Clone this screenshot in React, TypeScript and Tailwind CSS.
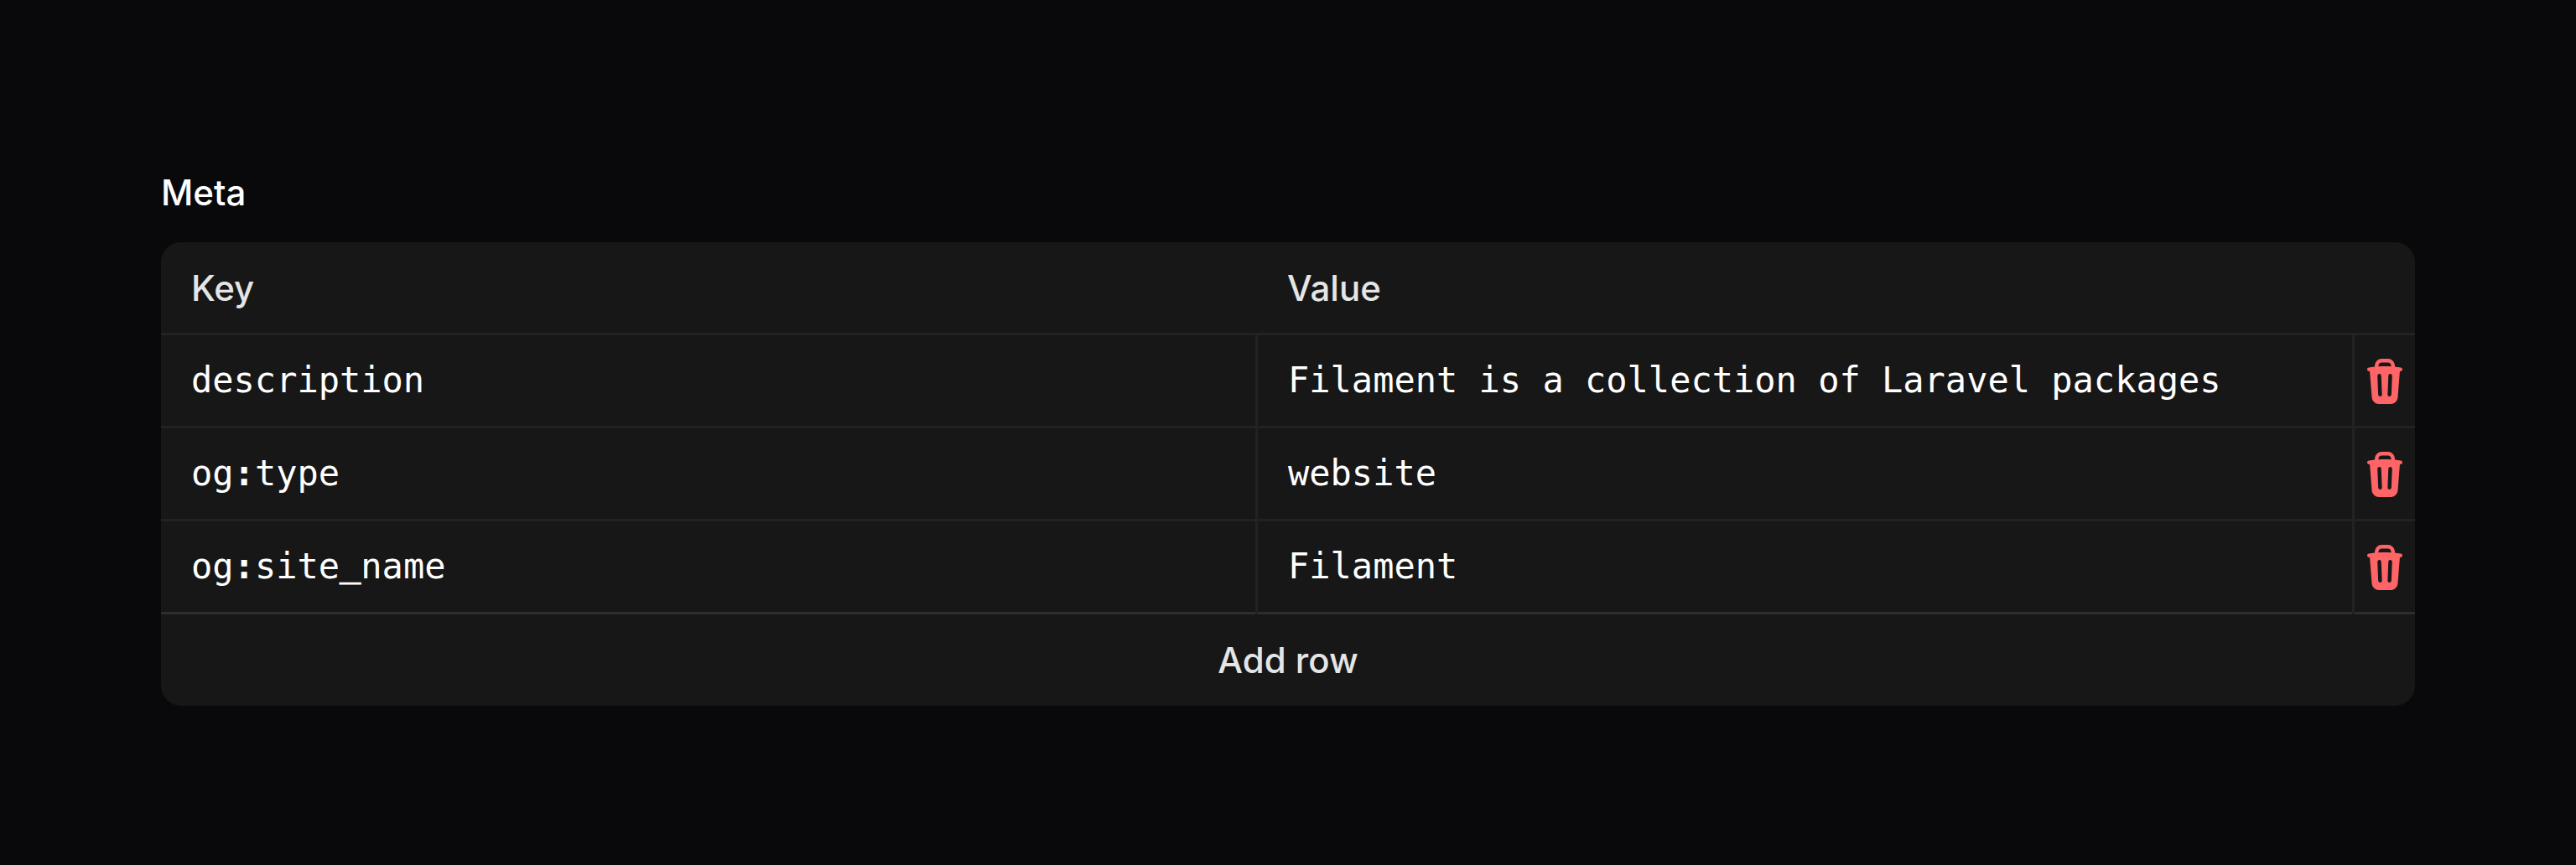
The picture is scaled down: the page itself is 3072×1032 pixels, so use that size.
import type { ReactNode } from "react";
import { HiMiniTrash } from "react-icons/hi2";

const rows: { id: string; key: ReactNode; value: string }[] = [
  { id: "description", key: "description", value: "Filament is a collection of Laravel packages" },
  {
    id: "type",
    key: (
      <>
        og<span className="font-bold">:</span>type
      </>
    ),
    value: "website",
  },
  {
    id: "site_name",
    key: (
      <>
        og<span className="font-bold">:</span>site
        <span className="relative -top-[3px] [-webkit-text-stroke:1px_white]">_</span>name
      </>
    ),
    value: "Filament",
  },
];

const columns = "grid grid-cols-[1308px_1308px_72px]";

export default function App() {
  return (
    <main className="h-[1032px] w-[3072px] bg-[#09090b] px-48 pt-[193px] font-[Inter,sans-serif] text-[42px] font-medium">
      <label className="block h-[72px] pt-px leading-[72px] text-white">Meta</label>

      <section className="mt-6 overflow-hidden rounded-[24px] bg-[#171717]">
        <header className={`${columns} h-[108px] pt-px leading-[108px] text-[#e5e5e5]`}>
          <div className="pl-9">Key</div>
          <div className="pl-[35px]">Value</div>
        </header>

        <div className="font-['DejaVu_Sans_Mono',monospace] font-normal text-white">
          {rows.map((row) => (
            <div key={row.id} className={`${columns} h-[111px] border-t-[3px] border-[#222222] leading-[108px]`}>
              <div className="border-r-[3px] border-[#222222] px-9">{row.key}</div>
              <div className="border-r-[3px] border-[#222222] px-9 whitespace-nowrap">{row.value}</div>
              <button className="flex items-center justify-center text-[#ff6467]" aria-label="Delete row">
                <HiMiniTrash className="mt-px size-[60px]" />
              </button>
            </div>
          ))}
        </div>

        <div className={`${columns} h-[3px] bg-[#2e2e2e]`}>
          <div className="border-r-[3px] border-[#222222]" />
          <div className="border-r-[3px] border-[#222222]" />
        </div>
        <button className="block h-[109px] w-full pt-px leading-[108px] text-[#e5e5e5]">Add row</button>
      </section>
    </main>
  );
}
